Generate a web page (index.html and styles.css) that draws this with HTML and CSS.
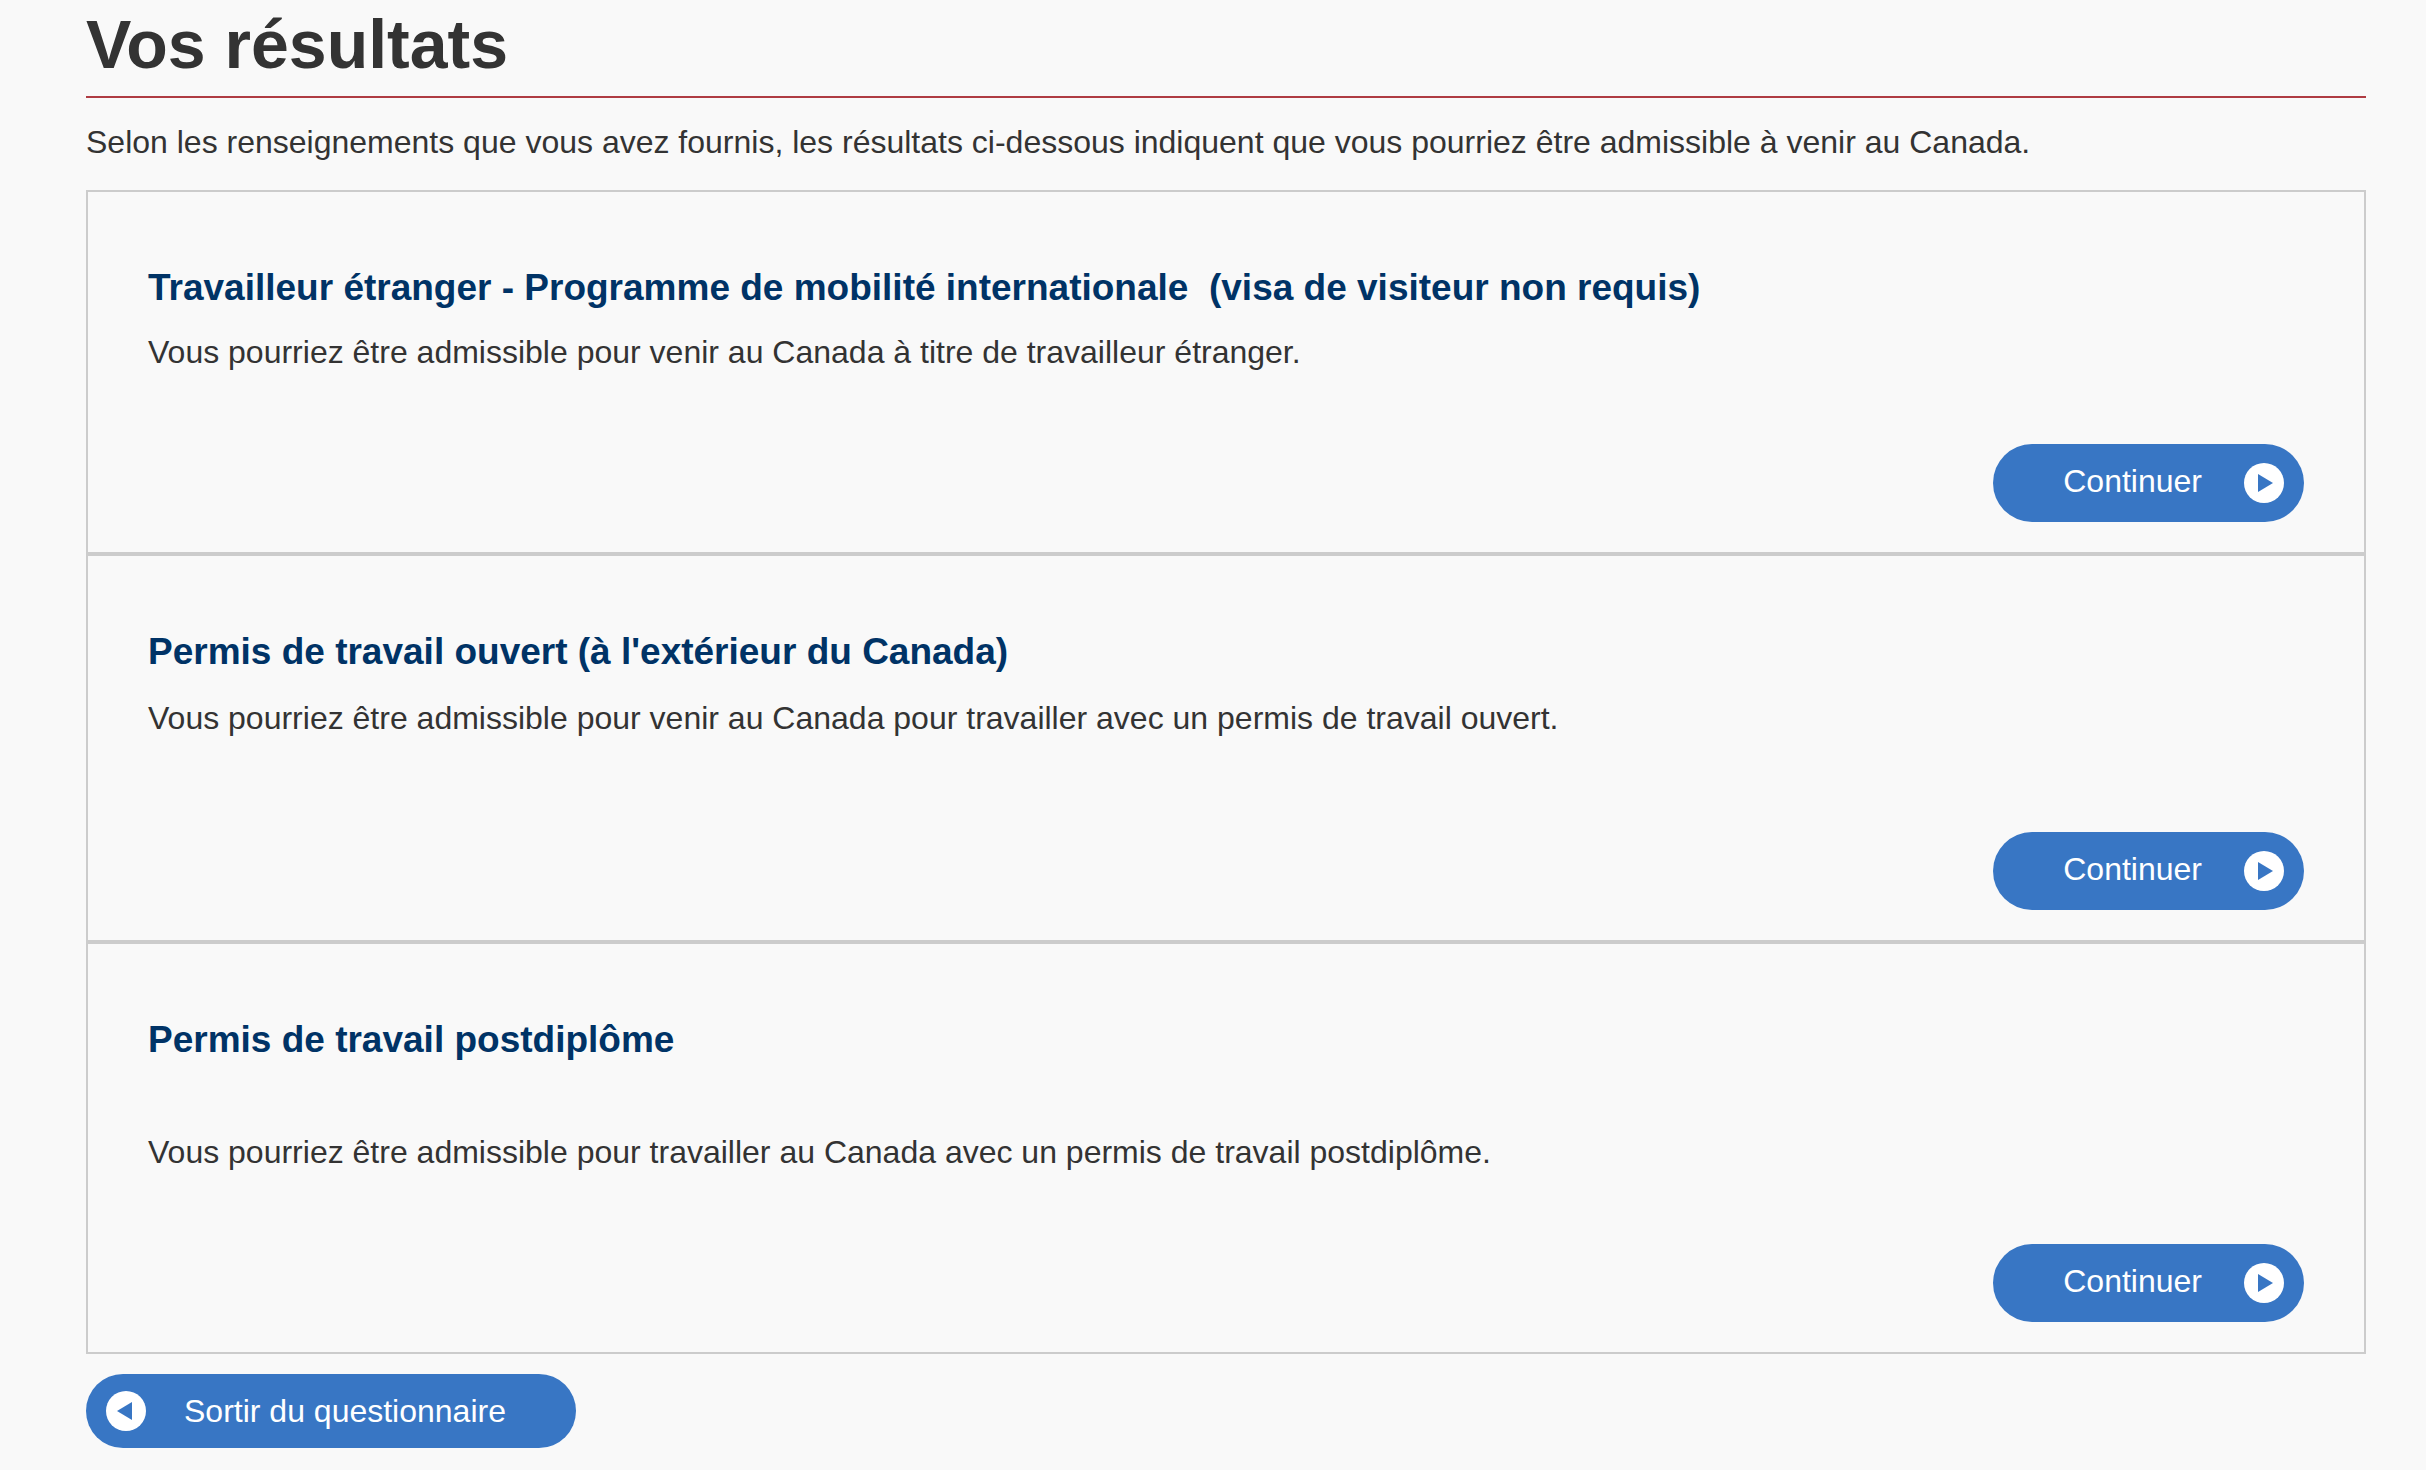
FILE: index.html
```html
<!DOCTYPE html>
<html lang="fr">
<head>
  <meta charset="UTF-8">
  <meta name="viewport" content="width=device-width, initial-scale=1.0">
  <title>Vos résultats</title>
  <link rel="stylesheet" href="styles.css">
</head>
<body>
  <main class="results">
    <h1>Vos résultats</h1>
    <p class="intro">Selon les renseignements que vous avez fournis, les résultats ci-dessous indiquent que vous pourriez être admissible à venir au Canada.</p>

    <section class="result">
      <h2>Travailleur étranger - Programme de mobilité internationale&nbsp; (visa de visiteur non requis)</h2>
      <p>Vous pourriez être admissible pour venir au Canada à titre de travailleur étranger.</p>
      <button class="btn next" type="button">
        <span>Continuer</span>
        <svg viewBox="0 0 40 40" aria-hidden="true"><circle cx="20" cy="20" r="20"/><path d="M14 11 L29 20 L14 29 Z"/></svg>
      </button>
    </section>

    <section class="result open-permit">
      <h2>Permis de travail ouvert (à l'extérieur du Canada)</h2>
      <p>Vous pourriez être admissible pour venir au Canada pour travailler avec un permis de travail ouvert.</p>
      <button class="btn next" type="button">
        <span>Continuer</span>
        <svg viewBox="0 0 40 40" aria-hidden="true"><circle cx="20" cy="20" r="20"/><path d="M14 11 L29 20 L14 29 Z"/></svg>
      </button>
    </section>

    <section class="result post-grad">
      <h2>Permis de travail postdiplôme</h2>
      <p>Vous pourriez être admissible pour travailler au Canada avec un permis de travail postdiplôme.</p>
      <button class="btn next" type="button">
        <span>Continuer</span>
        <svg viewBox="0 0 40 40" aria-hidden="true"><circle cx="20" cy="20" r="20"/><path d="M14 11 L29 20 L14 29 Z"/></svg>
      </button>
    </section>

    <button class="btn exit" type="button">
      <svg viewBox="0 0 40 40" aria-hidden="true"><circle cx="20" cy="20" r="20"/><path d="M26 11 L11 20 L26 29 Z"/></svg>
      <span>Sortir du questionnaire</span>
    </button>
  </main>
</body>
</html>
```

FILE: styles.css
```css
body {
  margin: 0;
  background-color: #f9f9f9;
  color: #333;
  font-family: "Liberation Sans", Arial, sans-serif;
  font-size: 32px;
  line-height: 44px;
}

.results {
  padding: 0 60px 0 86px;
}

h1 {
  margin: 0 0 22px;
  padding: 4px 0 12px;
  border-bottom: 2px solid #af3c43;
  font-size: 68px;
  line-height: 80px;
}

p {
  margin: 0;
}

.intro {
  margin-bottom: 26px;
}

/* Result boxes */
.result {
  display: flex;
  flex-direction: column;
  padding: 74px 60px 30px;
  border: 2px solid #ccc;
}

.result h2 {
  margin: 0 0 20px;
  color: #036;
  font-size: 37px;
  line-height: 44px;
}

.result .btn {
  align-self: flex-end;
  margin-top: 70px;
}

.open-permit h2 {
  margin-bottom: 22px;
}

.open-permit .btn {
  margin-top: 92px;
}

.post-grad h2 {
  margin-bottom: 68px;
}

/* Buttons */
.btn {
  display: flex;
  align-items: center;
  height: 78px;
  border: 0;
  border-radius: 39px;
  background-color: #3876c4;
  color: #fff;
  font-family: inherit;
  font-size: 32px;
  cursor: pointer;
}

.btn svg {
  width: 40px;
  height: 40px;
  fill: #fff;
}

.btn path {
  fill: #3876c4;
}

.next {
  gap: 42px;
  padding: 0 20px 0 70px;
}

.next span {
  padding-bottom: 4px;
}

.exit {
  gap: 38px;
  height: 74px;
  margin-top: 20px;
  padding: 0 70px 0 20px;
}
```
